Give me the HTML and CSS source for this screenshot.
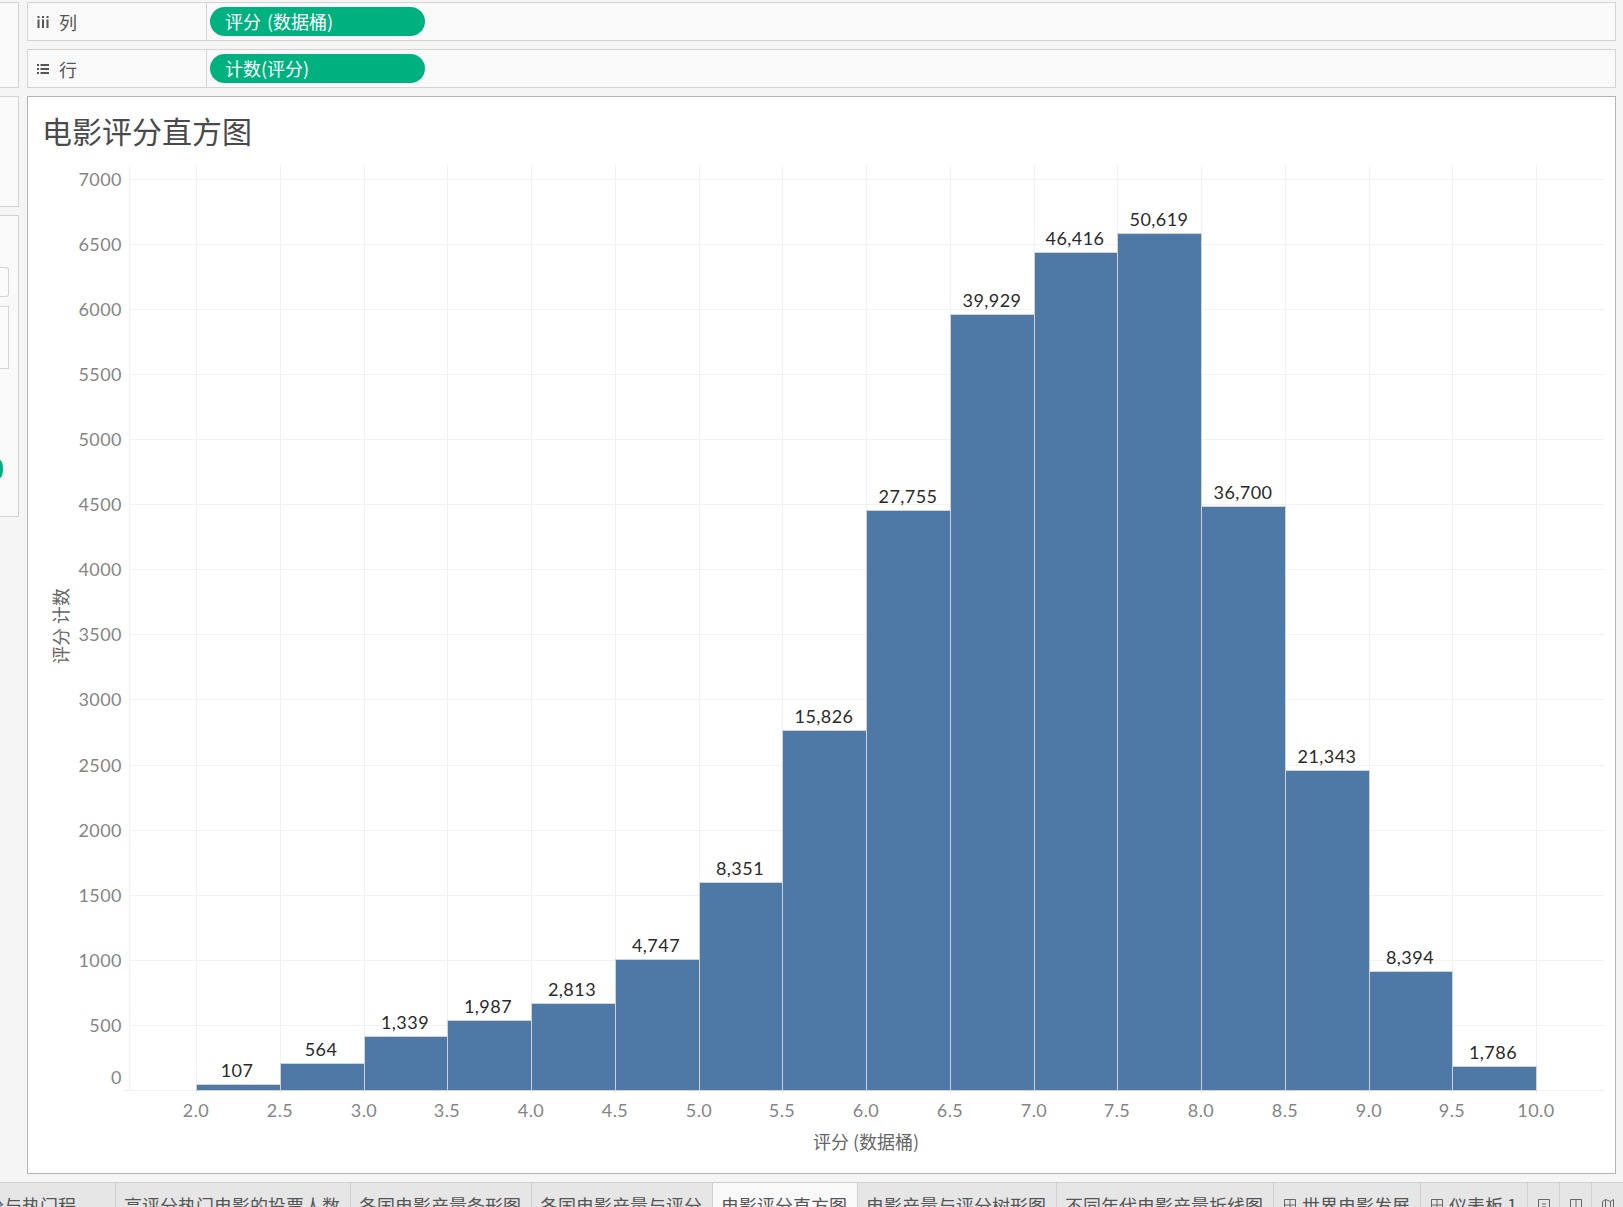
FILE: index.html
```html
<!DOCTYPE html>
<html lang="zh">
<head>
<meta charset="utf-8">
<title>电影评分直方图</title>
<link rel="stylesheet" href="styles.css">
</head>
<body>
<div class="page">
  <div class="workspace">
    <aside class="side">
      <div class="panel panel-a"></div>
      <div class="panel panel-b"></div>
      <div class="panel panel-c">
        <div class="stub stub-round"></div>
        <div class="stub stub-list"></div>
        <div class="stub-pill"></div>
      </div>
    </aside>
    <main class="main">
      <div class="shelf">
        <div class="shelf-label">
          <svg class="shelf-icon" viewBox="0 0 12 12"><path d="M1.5 0v2M1.5 3.5V12M6 0v2M6 3.5V12M10.5 0v2M10.5 3.5V12"/></svg>
          <span>列</span>
        </div>
        <div class="pill">评分 (数据桶)</div>
      </div>
      <div class="shelf">
        <div class="shelf-label">
          <svg class="shelf-icon" viewBox="0 0 12 12"><path d="M0 2h2M3.5 2H12M0 6h2M3.5 6H12M0 10h2M3.5 10H12"/></svg>
          <span>行</span>
        </div>
        <div class="pill">计数(评分)</div>
      </div>
      <section class="card">
        <h1 class="title">电影评分直方图</h1>
        <svg class="chart" viewBox="28 160 1586 1013">
          <g class="grid">
            <path d="M129 179.5H1604M129 244.5H1604M129 309.5H1604M129 374.5H1604M129 439.5H1604M129 504.5H1604M129 569.5H1604M129 634.5H1604M129 699.5H1604M129 765.5H1604M129 830.5H1604M129 895.5H1604M129 960.5H1604M129 1025.5H1604M124 1090.5H1604"/>
            <path d="M129.5 165V1090M196.5 165V1094M280.5 165V1094M364.5 165V1094M447.5 165V1094M531.5 165V1094M615.5 165V1094M699.5 165V1094M782.5 165V1094M866.5 165V1094M950.5 165V1094M1034.5 165V1094M1117.5 165V1094M1201.5 165V1094M1285.5 165V1094M1369.5 165V1094M1452.5 165V1094M1536.5 165V1094"/>
          </g>
          <g class="bars">
            <rect x="196.5" y="1084.5" width="84" height="6"/>
            <rect x="280.5" y="1063.5" width="84" height="27"/>
            <rect x="364.5" y="1036.5" width="83" height="54"/>
            <rect x="447.5" y="1020.5" width="84" height="70"/>
            <rect x="531.5" y="1003.5" width="84" height="87"/>
            <rect x="615.5" y="959.5" width="84" height="131"/>
            <rect x="699.5" y="882.5" width="83" height="208"/>
            <rect x="782.5" y="730.5" width="84" height="360"/>
            <rect x="866.5" y="510.5" width="84" height="580"/>
            <rect x="950.5" y="314.5" width="84" height="776"/>
            <rect x="1034.5" y="252.5" width="83" height="838"/>
            <rect x="1117.5" y="233.5" width="84" height="857"/>
            <rect x="1201.5" y="506.5" width="84" height="584"/>
            <rect x="1285.5" y="770.5" width="84" height="320"/>
            <rect x="1369.5" y="971.5" width="83" height="119"/>
            <rect x="1452.5" y="1066.5" width="84" height="24"/>
          </g>
          <g class="marks">
            <text x="237" y="1077">107</text>
            <text x="321" y="1056">564</text>
            <text x="405" y="1029">1,339</text>
            <text x="488" y="1013">1,987</text>
            <text x="572" y="996">2,813</text>
            <text x="656" y="952">4,747</text>
            <text x="740" y="875">8,351</text>
            <text x="824" y="723">15,826</text>
            <text x="908" y="503">27,755</text>
            <text x="992" y="307">39,929</text>
            <text x="1075" y="245">46,416</text>
            <text x="1159" y="226">50,619</text>
            <text x="1243" y="499">36,700</text>
            <text x="1327" y="763">21,343</text>
            <text x="1410" y="964">8,394</text>
            <text x="1493" y="1059">1,786</text>
          </g>
          <g class="y-ticks">
            <text x="122" y="186">7000</text>
            <text x="122" y="251">6500</text>
            <text x="122" y="316">6000</text>
            <text x="122" y="381">5500</text>
            <text x="122" y="446">5000</text>
            <text x="122" y="511">4500</text>
            <text x="122" y="576">4000</text>
            <text x="122" y="641">3500</text>
            <text x="122" y="706">3000</text>
            <text x="122" y="772">2500</text>
            <text x="122" y="837">2000</text>
            <text x="122" y="902">1500</text>
            <text x="122" y="967">1000</text>
            <text x="122" y="1032">500</text>
            <text x="122" y="1084">0</text>
          </g>
          <g class="x-ticks">
            <text x="196" y="1117">2.0</text>
            <text x="280" y="1117">2.5</text>
            <text x="364" y="1117">3.0</text>
            <text x="447" y="1117">3.5</text>
            <text x="531" y="1117">4.0</text>
            <text x="615" y="1117">4.5</text>
            <text x="699" y="1117">5.0</text>
            <text x="782" y="1117">5.5</text>
            <text x="866" y="1117">6.0</text>
            <text x="950" y="1117">6.5</text>
            <text x="1034" y="1117">7.0</text>
            <text x="1117" y="1117">7.5</text>
            <text x="1201" y="1117">8.0</text>
            <text x="1285" y="1117">8.5</text>
            <text x="1369" y="1117">9.0</text>
            <text x="1452" y="1117">9.5</text>
            <text x="1536" y="1117">10.0</text>
          </g>
          <text class="axis-title" x="866" y="1149">评分 (数据桶)</text>
          <text class="axis-title" transform="translate(68 626) rotate(-90)">评分 计数</text>
        </svg>
      </section>
    </main>
  </div>
  <nav class="tabs">
    <div class="tab tab-clipped">分与热门程</div>
    <div class="tab">高评分热门电影的投票人数</div>
    <div class="tab">各国电影产量条形图</div>
    <div class="tab">各国电影产量与评分</div>
    <div class="tab tab-active">电影评分直方图</div>
    <div class="tab">电影产量与评分树形图</div>
    <div class="tab">不同年代电影产量折线图</div>
    <div class="tab tab-icon">
      <svg class="tab-glyph" viewBox="0 0 12 12"><path d="M.5.5h11v11H.5zM6 .5v11M.5 6h11"/></svg>
      <span>世界电影发展</span>
    </div>
    <div class="tab tab-icon">
      <svg class="tab-glyph" viewBox="0 0 12 12"><path d="M.5.5h11v11H.5zM6 .5v11M.5 6h11"/></svg>
      <span>仪表板 1</span>
    </div>
    <div class="tab tab-new">
      <svg class="tab-glyph" viewBox="0 0 12 12"><path d="M.5 11.5V.5h11v11M4 5h4M4 8h4"/></svg>
    </div>
    <div class="tab tab-new">
      <svg class="tab-glyph" viewBox="0 0 12 12"><path d="M.5 11.5V.5h11v11M6 .5v11"/></svg>
    </div>
    <div class="tab tab-new">
      <svg class="tab-glyph" viewBox="0 0 12 12"><path d="M.5 11.5V2.5l3-2 5 2 3-2v11M3.5.5v11M8.5 2.5v9"/></svg>
    </div>
  </nav>
</div>
</body>
</html>
```
FILE: styles.css
```css
* {
  box-sizing: border-box;
}

html,
body {
  margin: 0;
  height: 100%;
  overflow: hidden;
  background: #f5f5f5;
}

body {
  font-family: "Noto Sans CJK SC", "Noto Sans", sans-serif;
  font-size: 18px;
  color: #555;
}

.page {
  height: 1207px;
  display: flex;
  flex-direction: column;
}

.workspace {
  height: 1182px;
  flex: none;
  display: flex;
  gap: 8px;
  padding: 2px 7px 8px 0;
}

/* left stub of the cards pane */
.side {
  width: 19px;
  flex: none;
  display: flex;
  flex-direction: column;
  gap: 8px;
}

.panel {
  background: #f9f9f9;
  border: 1px solid #d4d4d4;
  border-left: 0;
}

.panel-a {
  height: 86px;
}

.panel-b {
  height: 111px;
}

.panel-c {
  height: 302px;
  padding-top: 51px;
  display: flex;
  flex-direction: column;
  align-items: flex-start;
}

.stub {
  width: 9px;
  background: #fbfbfb;
  border: 1px solid #d4d4d4;
  border-left: 0;
}

.stub-round {
  height: 30px;
  border-radius: 0 3px 3px 0;
}

.stub-list {
  height: 63px;
  margin-top: 9px;
}

.stub-pill {
  width: 3px;
  height: 18px;
  margin-top: 91px;
  background: #00b180;
  border-radius: 0 100% 100% 0 / 0 50% 50% 0;
}

.main {
  flex: 1;
  min-width: 0;
  display: flex;
  flex-direction: column;
  gap: 8px;
}

.shelf {
  height: 39px;
  flex: none;
  display: flex;
  align-items: center;
  background: #f9f9f9;
  border: 1px solid #d4d4d4;
}

.shelf-label {
  width: 179px;
  height: 100%;
  flex: none;
  display: flex;
  align-items: center;
  gap: 10px;
  padding-left: 9px;
  border-right: 1px solid #d4d4d4;
  color: #555;
  line-height: 1;
}

.shelf-icon {
  width: 12px;
  height: 12px;
  fill: none;
  stroke: #555;
  stroke-width: 2;
}

.pill {
  width: 215px;
  height: 29px;
  margin-left: 3px;
  padding-left: 15px;
  border-radius: 15px;
  background: #00b180;
  color: #fff;
  line-height: 28px;
  word-spacing: 2px;
  white-space: nowrap;
}

.card {
  flex: 1;
  min-height: 0;
  background: #fff;
  border: 1px solid #b4b4b4;
}

.title {
  height: 63px;
  margin: 0;
  padding: 6px 0 0 14px;
  font-size: 30px;
  font-weight: 400;
  line-height: 55px;
  color: #4a4a4a;
}

.chart {
  display: block;
  width: 1586px;
  height: 1013px;
}

.grid path {
  fill: none;
  stroke: #f2f2f2;
  stroke-width: 1;
}

.bars rect {
  fill: #4e79a7;
  stroke: #d2d2d2;
  stroke-width: 1;
}

.marks text,
.y-ticks text,
.x-ticks text {
  font-family: Lato, "Open Sans", sans-serif;
  font-size: 18px;
  letter-spacing: 0.45px;
}

.marks text {
  fill: #2a2a2a;
  text-anchor: middle;
}

.y-ticks text {
  fill: #858585;
  text-anchor: end;
}

.x-ticks text {
  fill: #858585;
  text-anchor: middle;
}

.axis-title {
  font-size: 18px;
  fill: #666;
  text-anchor: middle;
}

.tabs {
  height: 25px;
  flex: none;
  display: flex;
  overflow: hidden;
  background: #e6e6e6;
  border-top: 1px solid #d0d0d0;
}

.tab {
  flex: none;
  padding: 10px 10px 0 8px;
  border-right: 1px solid #cfcfcf;
  line-height: 24px;
  white-space: nowrap;
  color: #555;
}

.tab-clipped {
  width: 116px;
  padding-right: 39px;
  display: flex;
  justify-content: flex-end;
}

.tab-active {
  background: #f9f9f9;
}

.tab-icon {
  display: flex;
  align-items: flex-start;
  gap: 6px;
  padding-left: 10px;
  padding-right: 10px;
}

.tab-new {
  width: 32px;
  padding-left: 10px;
  padding-right: 0;
  padding-top: 0;
}

.tab-glyph {
  display: block;
  width: 12px;
  height: 12px;
  margin-top: 6px;
  flex: none;
  fill: none;
  stroke: #666;
  stroke-width: 1;
}

.tab-new .tab-glyph {
  margin-top: 16px;
}
```
